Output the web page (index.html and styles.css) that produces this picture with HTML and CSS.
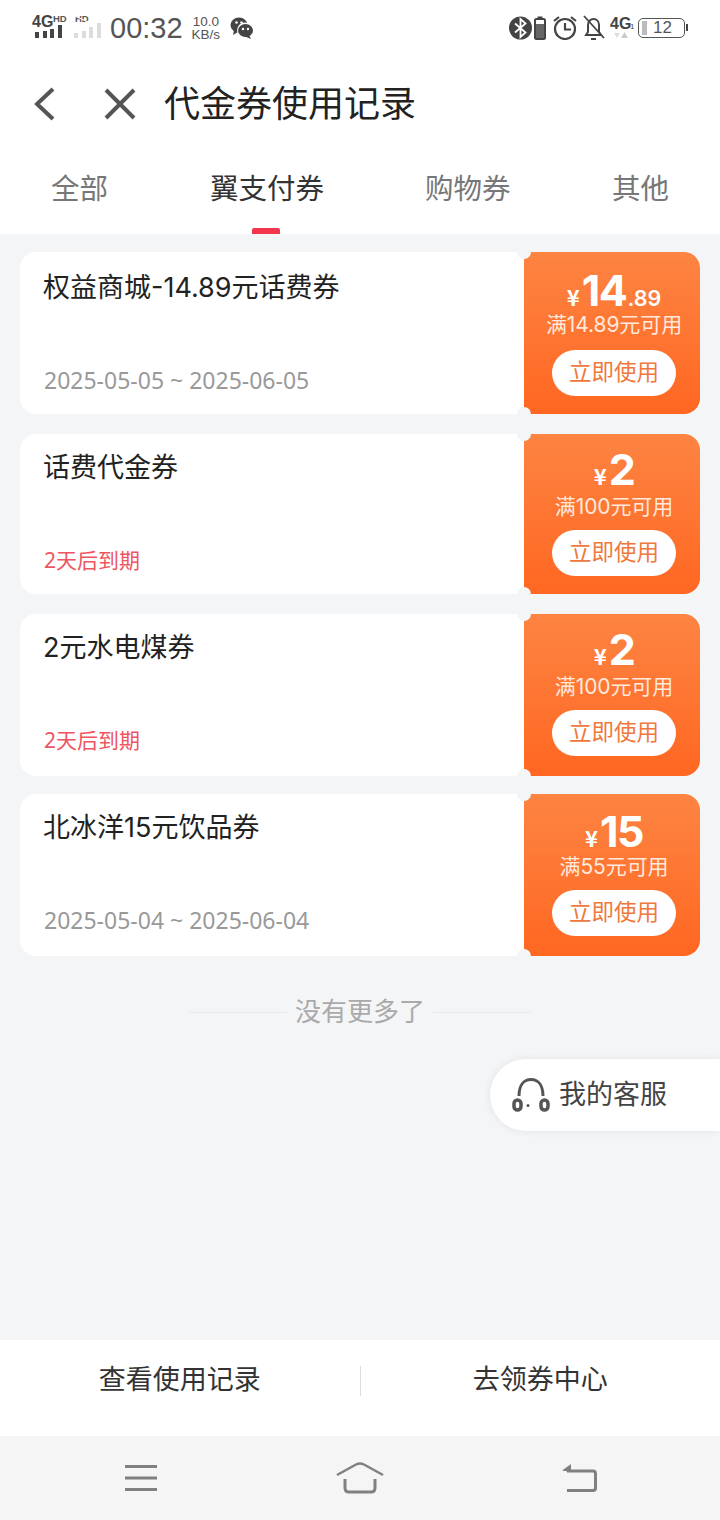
FILE: index.html
```html
<!DOCTYPE html>
<html lang="zh-CN">
<head>
	<meta charset="utf-8" />
	<title>代金券使用记录</title>
	<link rel="stylesheet" href="styles.css">
</head>
<body>

<div class="statusbar">
	<div class="status-left">
		<svg class="sim" width="36" height="38" viewBox="0 -6 36 38">
			<text x="0" y="12" class="sim-4g">4G</text>
			<text x="21" y="7" class="sim-hd">HD</text>
			<rect x="3" y="17" width="4" height="6" fill="#444"/>
			<rect x="11" y="16" width="4" height="7" fill="#444"/>
			<rect x="18" y="14" width="4" height="9" fill="#444"/>
			<rect x="26" y="10" width="4" height="13" fill="#444"/>
		</svg>
		<svg class="sim2" width="32" height="38" viewBox="0 -6 32 38">
			<text x="2" y="7" class="sim-hd">HD</text>
			<path d="M2 1 L15 7" stroke="#fff" stroke-width="1.200"/>
			<rect x="1" y="18" width="4" height="5" fill="#ddd"/>
			<rect x="9" y="16" width="4" height="7" fill="#ddd"/>
			<rect x="16" y="12" width="4" height="11" fill="#ddd"/>
			<rect x="24" y="8" width="4" height="15" fill="#ddd"/>
		</svg>
		<span class="time">00:32</span>
		<span class="speed">10.0<br>KB/s</span>
		<svg class="wechat" width="24" height="24" viewBox="0 0 24 24">
			<ellipse cx="9" cy="9" rx="8.500" ry="7.500" fill="#444"/>
			<path d="M4 14 L3 19 L8 16Z" fill="#444"/>
			<circle cx="15" cy="14.500" r="8" fill="#fff"/>
			<ellipse cx="15.500" cy="14.500" rx="7.500" ry="6.500" fill="#444"/>
			<path d="M19 19 L21 23 L15 20.500Z" fill="#444"/>
			<circle cx="6.500" cy="6.500" r="1.300" fill="#fff"/>
			<circle cx="11.500" cy="6.500" r="1.300" fill="#fff"/>
			<circle cx="13" cy="13" r="1.200" fill="#fff"/>
			<circle cx="18" cy="13" r="1.200" fill="#fff"/>
		</svg>
	</div>
	<div class="status-right">
		<svg width="23" height="24" viewBox="0 0 23 24">
			<circle cx="11.500" cy="12" r="11.500" fill="#444"/>
			<path d="M6 7.500 L16.500 16.500 L11.500 21 V3 L16.500 7.500 L6 16.500" fill="none" stroke="#fff" stroke-width="1.800"/>
		</svg>
		<svg class="gap-cell" width="12" height="24" viewBox="0 0 12 24">
			<rect x="3.500" y="0.500" width="5" height="3" fill="#444"/>
			<rect x="1" y="3" width="10" height="20" rx="1.500" fill="none" stroke="#444" stroke-width="2"/>
			<rect x="2" y="8" width="8" height="14" fill="#666"/>
		</svg>
		<svg class="gap-alarm" width="24" height="24" viewBox="0 0 24 24">
			<circle cx="12" cy="13" r="10" fill="none" stroke="#444" stroke-width="2.200"/>
			<path d="M12 7 V13.500 H18" fill="none" stroke="#444" stroke-width="2.200"/>
			<path d="M1 5 L6 1 M23 5 L18 1" stroke="#444" stroke-width="2.200"/>
		</svg>
		<svg class="gap-bell" width="22" height="26" viewBox="0 0 22 26">
			<path d="M3 20 L5 17 V10 C5 6 8 4 10.500 4 C14 4 16 7 16 10 V17 L18 20Z" fill="none" stroke="#444" stroke-width="2"/>
			<path d="M8 24 H13" stroke="#444" stroke-width="2"/>
			<path d="M1 1 L21 23" stroke="#444" stroke-width="1.800"/>
		</svg>
		<svg class="gap-net" width="24" height="38" viewBox="0 -6 24 38">
			<text x="0" y="14" class="net-4g">4G</text>
			<text x="20" y="14" class="net-1">1</text>
			<path d="M4 18 H10 L7 23Z" fill="#ddd"/>
			<path d="M11 23 H18 L14.500 17Z" fill="#ccc"/>
		</svg>
		<div class="battery">
			<span class="battery-level"></span>
			<span class="battery-num">12</span>
		</div>
	</div>
</div>

<header class="topbar">
	<svg class="back" width="26" height="34" viewBox="0 0 26 34">
		<path d="M22 2 L6 17 L22 32" fill="none" stroke="#555" stroke-width="4"/>
	</svg>
	<svg class="close" width="34" height="34" viewBox="0 0 34 34">
		<path d="M3 3 L31 31 M31 3 L3 31" fill="none" stroke="#555" stroke-width="4"/>
	</svg>
	<h1>代金券使用记录</h1>
</header>

<nav class="tabs">
	<a class="tab tab-all">全部</a>
	<a class="tab tab-pay active">翼支付券</a>
	<a class="tab tab-shop">购物券</a>
	<a class="tab tab-other">其他</a>
</nav>

<main class="content">
	<div class="coupon first">
		<div class="coupon-info">
			<div class="coupon-name">权益商城-14.89元话费券</div>
			<div class="coupon-date">2025-05-05 ~ 2025-06-05</div>
		</div>
		<div class="coupon-side">
			<div class="price"><span class="yen">¥</span><span class="num">14</span><span class="cents">.89</span></div>
			<div class="rule">满14.89元可用</div>
			<button type="button" class="use">立即使用</button>
		</div>
	</div>

	<div class="coupon short">
		<div class="coupon-info">
			<div class="coupon-name">话费代金券</div>
			<div class="coupon-date expire">2天后到期</div>
		</div>
		<div class="coupon-side">
			<div class="price"><span class="yen">¥</span><span class="num">2</span></div>
			<div class="rule">满100元可用</div>
			<button type="button" class="use">立即使用</button>
		</div>
	</div>

	<div class="coupon">
		<div class="coupon-info">
			<div class="coupon-name">2元水电煤券</div>
			<div class="coupon-date expire">2天后到期</div>
		</div>
		<div class="coupon-side">
			<div class="price"><span class="yen">¥</span><span class="num">2</span></div>
			<div class="rule">满100元可用</div>
			<button type="button" class="use">立即使用</button>
		</div>
	</div>

	<div class="coupon last">
		<div class="coupon-info">
			<div class="coupon-name">北冰洋15元饮品券</div>
			<div class="coupon-date">2025-05-04 ~ 2025-06-04</div>
		</div>
		<div class="coupon-side">
			<div class="price"><span class="yen">¥</span><span class="num">15</span></div>
			<div class="rule">满55元可用</div>
			<button type="button" class="use">立即使用</button>
		</div>
	</div>

	<div class="nomore"><span class="line"></span>没有更多了<span class="line"></span></div>

	<div class="service">
		<svg width="38" height="36" viewBox="0 0 38 36">
			<path d="M7 19 C7 8 12 2.500 19 2.500 C26 2.500 31 8 31 19" fill="none" stroke="#555" stroke-width="3"/>
			<rect x="2" y="23" width="7" height="10" rx="3.500" fill="none" stroke="#555" stroke-width="3.500"/>
			<rect x="29" y="23" width="7" height="10" rx="3.500" fill="none" stroke="#555" stroke-width="3.500"/>
			<circle cx="16" cy="28.500" r="1.500" fill="#555"/>
		</svg>
		<span class="service-text">我的客服</span>
	</div>
</main>

<div class="actions">
	<a class="action">查看使用记录</a>
	<span class="divider"></span>
	<a class="action">去领券中心</a>
</div>

<div class="navbar">
	<svg width="34" height="26" viewBox="0 0 34 26">
		<path d="M1 1.500 H33 M1 13 H33 M1 24.500 H33" fill="none" stroke="#808080" stroke-width="3"/>
	</svg>
	<svg width="48" height="32" viewBox="0 0 48 32">
		<path d="M1 13 L20 2.500 Q24 0.500 28 2.500 L47 13" fill="none" stroke="#808080" stroke-width="2.500"/>
		<path d="M9 17 V26 Q9 30 13 30 H35 Q39 30 39 26 V17" fill="none" stroke="#808080" stroke-width="3"/>
	</svg>
	<svg width="36" height="30" viewBox="0 0 36 30">
		<path d="M6 8 H32 Q34.500 8 34.500 10.500 V25 Q34.500 27.500 32 27.500 H6" fill="none" stroke="#808080" stroke-width="3"/>
		<path d="M1 7.500 L10 1 V9Z" fill="#808080"/>
	</svg>
</div>

</body>
</html>
```

FILE: styles.css
```css
* {
	box-sizing: border-box;
	font-family: "Liberation Sans", "Noto Sans CJK SC", sans-serif;
}

body {
	margin: 0;
	width: 720px;
	height: 1520px;
	display: flex;
	flex-direction: column;
	background: #fff;
	overflow: hidden;
}

/* status bar */
.statusbar {
	height: 60px;
	flex: none;
	display: flex;
	justify-content: space-between;
	align-items: center;
	padding: 0 35px 4px 32px;
	color: #444;
}

.status-left,
.status-right {
	display: flex;
	align-items: center;
}

.sim-4g {
	font-size: 16px;
	font-weight: bold;
	fill: #444;
}

.sim-hd {
	font-size: 9.500px;
	font-weight: bold;
	fill: #555;
}

.sim2 {
	margin-left: 5px;
}

.time {
	font-size: 29px;
	margin-left: 5px;
	color: #555;
}

.speed {
	font-size: 13.500px;
	line-height: 13px;
	margin-left: 9px;
	text-align: center;
	color: #555;
}

.wechat {
	margin-left: 10px;
}

.gap-cell {
	margin-left: 2px;
}

.gap-alarm {
	margin-left: 7px;
}

.gap-bell {
	margin-left: 6px;
}

.gap-net {
	margin-left: 5px;
}

.net-4g {
	font-size: 16px;
	font-weight: bold;
	fill: #444;
}

.net-1 {
	font-size: 8px;
	fill: #444;
}

.battery {
	width: 47px;
	height: 20px;
	margin-left: 4px;
	border: 1.500px solid #555;
	border-radius: 5px;
	display: flex;
	align-items: center;
	position: relative;
	padding-left: 3px;
}

.battery::after {
	content: "";
	position: absolute;
	right: -4px;
	top: 5px;
	width: 2px;
	height: 7px;
	background: #444;
}

.battery-level {
	width: 5px;
	height: 14px;
	background: #bbb;
}

.battery-num {
	font-size: 17px;
	color: #555;
	margin-left: 6px;
}

/* title */
.topbar {
	height: 88px;
	flex: none;
	display: flex;
	align-items: center;
	padding-left: 31px;
}

.close {
	margin-left: 46px;
}

.topbar h1 {
	margin: 0 0 6px 27px;
	font-size: 36px;
	font-weight: normal;
	color: #222;
}

/* tabs */
.tabs {
	height: 86px;
	flex: none;
	position: relative;
	display: flex;
	font-size: 28.500px;
	color: #777;
}

.tab {
	position: absolute;
	top: 21px;
	line-height: 40px;
}

.tab-all { left: 51px; }
.tab-pay { left: 210px; }
.tab-shop { left: 425px; }
.tab-other { left: 612px; }

.tab.active {
	color: #333;
}

.tab.active::after {
	content: "";
	position: absolute;
	left: 42px;
	top: 59px;
	width: 28px;
	height: 6px;
	border-radius: 2px 2px 0 0;
	background: #f4364c;
}

/* list */
.content {
	flex: 1;
	position: relative;
	background: #f4f5f7;
	padding: 18px 20px 0;
}

.coupon {
	height: 162px;
	display: flex;
	margin-bottom: 18px;
}

.coupon.short {
	height: 160px;
	margin-bottom: 20px;
}

.coupon.first {
	margin-bottom: 20px;
}

.coupon-info {
	flex: 1;
	background: #fff;
	border-radius: 16px 0 0 16px;
	padding: 16px 23px 0;
}

.first .coupon-info {
	padding-top: 18px;
}

.coupon-name {
	font-size: 27px;
	line-height: 36px;
	color: #222;
	font-family: "Inter", "Noto Sans CJK SC", sans-serif;
}

.coupon-date {
	margin: 59px 0 0 1px;
	font-size: 23px;
	line-height: 30px;
	color: #999;
	font-family: "Noto Sans", "Noto Sans CJK SC", sans-serif;
}

.coupon-date.expire {
	font-size: 21px;
	color: #ee5560;
}

.coupon-side {
	width: 176px;
	flex: none;
	position: relative;
	border-radius: 0 16px 16px 0;
	background: linear-gradient(180deg, #fd8442 0%, #ff6722 100%);
	display: flex;
	flex-direction: column;
	align-items: center;
	padding: 12px 0 0 4px;
	color: #fff;
}

.first .coupon-side {
	padding-top: 15px;
}

.last .coupon-side {
	padding-top: 14px;
}

/* the little bites out of the ticket corners */
.coupon-side::before,
.coupon-side::after {
	content: "";
	position: absolute;
	left: -7px;
	width: 14px;
	height: 14px;
	border-radius: 50%;
	background: #f4f5f7;
}

.coupon-side::before {
	top: -7px;
}

.coupon-side::after {
	bottom: -7px;
}

.price {
	height: 46px;
	display: flex;
	align-items: baseline;
	line-height: 46px;
}

.yen {
	font-size: 22px;
	font-weight: bold;
	font-family: "Noto Sans CJK SC", sans-serif;
	margin-right: 2px;
}

.num {
	font-size: 43px;
	font-weight: bold;
	font-family: "Inter", sans-serif;
	letter-spacing: -1.500px;
}

.cents {
	font-size: 21.500px;
	font-weight: 600;
	font-family: "Inter", sans-serif;
	margin-left: 1px;
}

.rule {
	margin-top: 1px;
	font-size: 21px;
	line-height: 28px;
	color: #ffe9dc;
	font-family: "Inter", "Noto Sans CJK SC", sans-serif;
	letter-spacing: -0.100px;
}

.first .rule {
	margin-top: -2px;
}

.last .rule {
	margin-top: -1px;
}

.use {
	width: 124px;
	height: 46px;
	margin-top: 9px;
	border: 0;
	padding: 0 0 7px;
	border-radius: 23px;
	background: #fff;
	font-size: 22.500px;
	color: #f0783c;
}

.first .use {
	margin-top: 11px;
}

.nomore {
	display: flex;
	justify-content: center;
	align-items: center;
	gap: 8px;
	margin-top: 38px;
	font-size: 26px;
	line-height: 36px;
	color: #aaa;
}

.nomore .line {
	width: 98px;
	height: 1px;
	background: #e9e9e9;
}

.service {
	position: absolute;
	right: 0;
	top: 825px;
	width: 230px;
	height: 72px;
	background: #fff;
	border-radius: 36px 0 0 36px;
	box-shadow: 0 0 8px rgba(0,0,0,.08);
	display: flex;
	align-items: center;
	padding-left: 22px;
	gap: 9px;
	font-size: 27px;
	color: #444;
}

.service-text {
	margin-bottom: 6px;
}

/* bottom */
.actions {
	height: 96px;
	flex: none;
	display: flex;
	align-items: center;
	padding-bottom: 14px;
	background: #fff;
	font-size: 27px;
	color: #333;
}

.action {
	flex: 1;
	text-align: center;
	margin-bottom: 8px;
}

.divider {
	width: 1px;
	height: 30px;
	background: #ddd;
}

.navbar {
	height: 84px;
	flex: none;
	background: #f5f5f5;
	display: flex;
	align-items: center;
	justify-content: space-between;
	padding: 0 123px 0 124px;
}
```
